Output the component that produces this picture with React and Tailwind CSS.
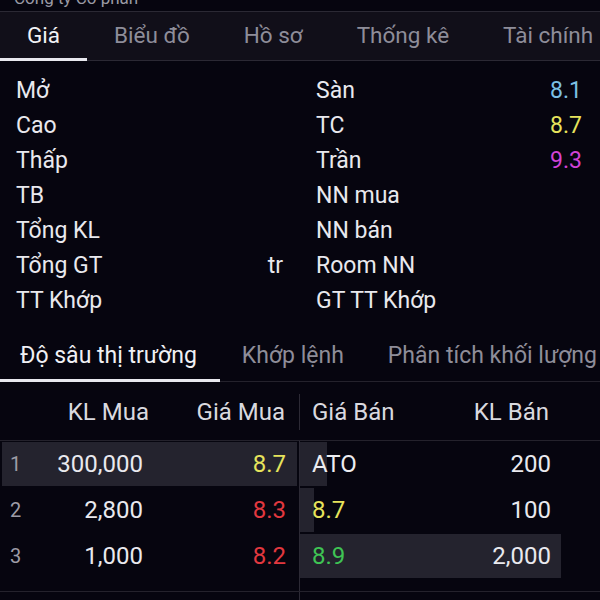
import React from "react";

const mainTabs = ["Giá", "Biểu đồ", "Hồ sơ", "Thống kê", "Tài chính"];

const leftInfo = [
  { label: "Mở", value: "" },
  { label: "Cao", value: "" },
  { label: "Thấp", value: "" },
  { label: "TB", value: "" },
  { label: "Tổng KL", value: "" },
  { label: "Tổng GT", value: "tr" },
  { label: "TT Khớp", value: "" },
];

const rightInfo = [
  { label: "Sàn", value: "8.1", color: "text-[#7cc0e4]" },
  { label: "TC", value: "8.7", color: "text-[#e6e35c]" },
  { label: "Trần", value: "9.3", color: "text-[#d243d6]" },
  { label: "NN mua", value: "" },
  { label: "NN bán", value: "" },
  { label: "Room NN", value: "" },
  { label: "GT TT Khớp", value: "" },
];

const book = [
  { n: 1, bidVol: "300,000", bid: "8.7", bidColor: "text-[#e6e35c]", ask: "ATO", askColor: "text-[#ececf0]", askVol: "200", bidBar: 295, askBar: 27 },
  { n: 2, bidVol: "2,800", bid: "8.3", bidColor: "text-[#e2383f]", ask: "8.7", askColor: "text-[#e6e35c]", askVol: "100", bidBar: 0, askBar: 14 },
  { n: 3, bidVol: "1,000", bid: "8.2", bidColor: "text-[#e2383f]", ask: "8.9", askColor: "text-[#3fc454]", askVol: "2,000", bidBar: 0, askBar: 261 },
];

export default function App() {
  return (
    <div className="w-[600px] h-[600px] overflow-hidden bg-[#06050f] text-[#e9e9ee] font-['Roboto',sans-serif]">
      {/* cut-off title */}
      <div className="h-[11px] overflow-hidden">
        <div className="-mt-[12px] pl-[14px] text-[17px] leading-[20px] text-[#9a9aa4]">Công ty Cổ phần</div>
      </div>

      {/* main tabs */}
      <div className="h-[50px] bg-[#110f19] border-t border-b border-[#2b2934] flex items-stretch">
        {mainTabs.map((t, i) => (
          <div
            key={t}
            className={`relative flex items-center px-[27px] text-[22.5px] whitespace-nowrap ${
              i === 0 ? "text-[#f2f2f5]" : "text-[#8e8d99]"
            }`}
          >
            {t}
            {i === 0 && (
              <span className="absolute left-0 right-0 -bottom-px h-[3px] bg-[#e8e8ee]" />
            )}
          </div>
        ))}
      </div>

      {/* info */}
      <div className="grid grid-cols-2 pt-[13px] text-[23px]">
        <div className="flex flex-col">
          {leftInfo.map((r) => (
            <div key={r.label} className="h-[35px] flex items-center justify-between pl-[16px] pr-[17px]">
              <span>{r.label}</span>
              <span>{r.value}</span>
            </div>
          ))}
        </div>
        <div className="flex flex-col">
          {rightInfo.map((r) => (
            <div key={r.label} className="h-[35px] flex items-center justify-between pl-[16px] pr-[18px]">
              <span>{r.label}</span>
              <span className={r.color}>{r.value}</span>
            </div>
          ))}
        </div>
      </div>

      {/* depth tabs */}
      <div className="mt-[12px] h-[51px] border-b border-[#24222c] flex items-stretch text-[23px] whitespace-nowrap">
        <div className="relative flex items-center pl-[20px] pr-[23px] text-[#f0f0f4]">
          Độ sâu thị trường
          <span className="absolute left-0 right-0 -bottom-px h-[3px] bg-[#e8e8ee]" />
        </div>
        <div className="flex items-center px-[22px] text-[#8e8d99]">Khớp lệnh</div>
        <div className="flex items-center pl-[22px] text-[#8e8d99]">Phân tích khối lượng</div>
      </div>

      {/* header */}
      <div className="h-[59px] grid grid-cols-2 border-b border-[#24222c] text-[24px] text-[#d9d9df]">
        <div className="flex items-center pr-[14px] border-r border-[#2c2a35] mt-[12px] mb-[16px]">
          <span className="w-[149px] text-right">KL Mua</span>
          <span className="flex-1 text-right">Giá Mua</span>
        </div>
        <div className="flex items-center pl-[12px] pr-[51px] pb-[4px]">
          <span className="flex-1">Giá Bán</span>
          <span>KL Bán</span>
        </div>
      </div>

      {/* rows */}
      <div className="border-b border-[#24222c]">
        {book.map((r) => (
          <div key={r.n} className="h-[46px] grid grid-cols-2 text-[24px]">
            <div className="relative flex items-center pr-[13px] border-r border-[#2c2a35]">
              <div
                className="absolute top-px bottom-px right-[2px] bg-[#24232e]"
                style={{ width: r.bidBar }}
              />
              <span className="relative w-[28px] pl-[10px] text-[20px] text-[#9d9ca6]">{r.n}</span>
              <span className="relative w-[115px] text-right">{r.bidVol}</span>
              <span className={`relative flex-1 text-right ${r.bidColor}`}>{r.bid}</span>
            </div>
            <div className="relative flex items-center pl-[12px] pr-[49px]">
              <div
                className="absolute top-px bottom-px left-0 bg-[#24232e]"
                style={{ width: r.askBar }}
              />
              <span className={`relative flex-1 ${r.askColor}`}>{r.ask}</span>
              <span className="relative">{r.askVol}</span>
            </div>
          </div>
        ))}
        <div className="h-[12px] grid grid-cols-2">
          <div className="border-r border-[#2c2a35]" />
          <div />
        </div>
      </div>
      <div className="h-[20px] grid grid-cols-2">
        <div className="border-r border-[#2c2a35]" />
        <div />
      </div>
    </div>
  );
}
